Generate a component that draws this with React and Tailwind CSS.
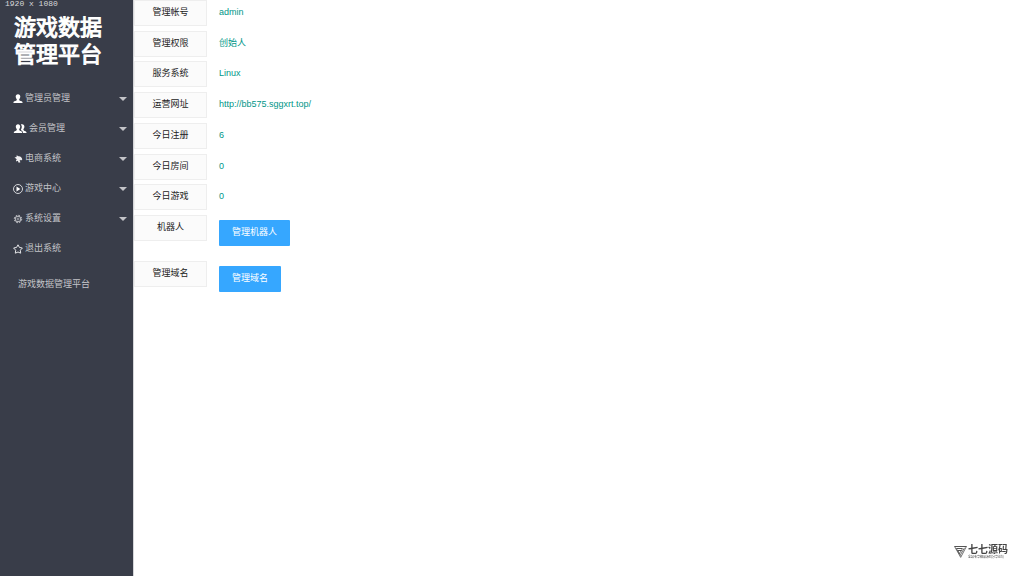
import { useState } from "react";

const menu = [
  { id: "admin", label: "管理员管理", icon: UserIcon, sub: true },
  { id: "member", label: "会员管理", icon: GroupIcon, sub: true },
  { id: "shop", label: "电商系统", icon: PlaneIcon, sub: true },
  { id: "game", label: "游戏中心", icon: PlayIcon, sub: true },
  { id: "setting", label: "系统设置", icon: GearIcon, sub: true },
  { id: "logout", label: "退出系统", icon: StarIcon, sub: false },
];

const info = [
  { label: "管理帐号", value: "admin" },
  { label: "管理权限", value: "创始人" },
  { label: "服务系统", value: "Linux" },
  { label: "运营网址", value: "http://bb575.sggxrt.top/" },
  { label: "今日注册", value: "6" },
  { label: "今日房间", value: "0" },
  { label: "今日游戏", value: "0" },
];

const actions = [
  { label: "机器人", button: "管理机器人" },
  { label: "管理域名", button: "管理域名" },
];

function UserIcon() {
  return (
    <svg viewBox="0 0 10 10" className="w-[10px] h-[10px]" fill="#fff">
      <path d="M5 .2c1.500 0 2.300 1 2.300 2.400 0 1.300-.5 2-1.100 2.700 0 1 .4 1.500 1.500 1.800 1.300.3 1.900.7 1.900 1.900H.4c0-1.200.6-1.600 1.900-1.900 1.100-.3 1.500-.8 1.500-1.800-.6-.7-1.100-1.400-1.100-2.700C2.700 1.200 3.500.2 5 .2z" />
    </svg>
  );
}

function GroupIcon() {
  return (
    <svg viewBox="0 0 14 10" className="w-[14px] h-[10px]" fill="#fff">
      <path d="M5 .2c1.400 0 2.200 1 2.200 2.400 0 1.200-.4 2-1 2.600 0 1 .4 1.400 1.400 1.700 1 .3 1.700.9 1.700 2.100H.8c0-1.200.6-1.800 1.600-2.100s1.400-.7 1.400-1.700c-.6-.6-1-1.400-1-2.600C2.800 1.200 3.600.2 5 .2z" />
      <path d="M9.200.2c1.400 0 2.200 1 2.200 2.400 0 1.200-.4 2-1 2.600 0 1 .4 1.400 1.400 1.700 1 .3 1.800.9 1.800 2.100h-3.500c0-1.300-.6-2.200-2-2.800-.2-.3-.2-.5-.1-.8.600-.8.9-1.700.8-2.800C8.700 1.700 8.400 1 7.800.5 8.200.3 8.700.2 9.200.2z" />
    </svg>
  );
}

function PlaneIcon() {
  return (
    <svg viewBox="0 0 10 10" className="w-[10px] h-[10px]" fill="#f0f0f2">
      <path d="M1.500 3.500 3.500 3 3.700 1.300l1.700 1C7.400 2 9 3.400 9.300 5.600L8 6.500 7 5.700l-.3 1 .7 1.500-1.700.6-.9-2.100-1.500.9L3 6.200l.8-1z" />
    </svg>
  );
}

function PlayIcon() {
  return (
    <svg viewBox="0 0 10 10" className="w-[10px] h-[10px]">
      <circle cx="5" cy="5" r="4.500" fill="none" stroke="#e4e5e8" strokeWidth=".9" />
      <path d="M3.500 2.600 7.400 5 3.500 7.400z" fill="#fff" />
    </svg>
  );
}

function GearIcon() {
  return (
    <svg viewBox="0 0 10 10" className="w-[10px] h-[10px]" fill="none" stroke="#d0d1d6">
      <circle cx="5" cy="5" r="3.700" strokeWidth="1" strokeDasharray="1.600 1.306" />
      <circle cx="5" cy="5" r="2.800" strokeWidth=".9" />
      <circle cx="5" cy="5" r="1" strokeWidth=".6" />
    </svg>
  );
}

function StarIcon() {
  return (
    <svg viewBox="0 0 10 10" className="w-[10px] h-[10px]" fill="none" stroke="#e4e5e8" strokeLinejoin="round">
      <path d="M5 .8 6.400 3.400l3 .6-2.100 2.200.4 3L5 8 2.300 9.200l.4-3L.6 4l3-.6z" />
    </svg>
  );
}

function Sidebar() {
  const [active, setActive] = useState(null);

  return (
    <aside className="w-[133px] shrink-0 bg-[#393d49] text-[#c3c4c8]">
      <div className="pl-[5px] h-2 font-['Liberation_Mono',monospace] text-[8px] leading-2 text-[#d8d8da]">1920 x 1080</div>
      <h1 className="mt-[6px] pl-[14px] text-[22px] leading-[27px] font-normal text-white [-webkit-text-stroke:1px_#fff] [paint-order:stroke] [stroke-linejoin:round]">
        游戏数据
        <br />
        管理平台
      </h1>
      <nav className="mt-4">
        {menu.map((item) => (
          <button
            key={item.id}
            onClick={() => setActive(item.id)}
            aria-current={active === item.id}
            className="flex items-center w-full h-[30px] pl-[13px] pr-[6px] gap-[2px] text-left hover:text-white"
          >
            <item.icon />
            <span className="flex-1">{item.label}</span>
            {item.sub && (
              <svg viewBox="0 0 8 4" className="w-2 h-1" fill="#c3c4c8">
                <path d="M0 0h8L4 4z" />
              </svg>
            )}
          </button>
        ))}
      </nav>
      <a href="#" className="block mt-[5px] pl-[18px] leading-[30px]">游戏数据管理平台</a>
    </aside>
  );
}

function Label({ children }) {
  return (
    <dt className="w-[73px] h-[26px] shrink-0 border border-[#eeeeee] bg-[#fbfbfb] text-center leading-[22px] text-[#222]">
      {children}
    </dt>
  );
}

function Watermark() {
  return (
    <div className="fixed right-4 bottom-[17px] flex items-center gap-px text-[#444]">
      <svg viewBox="0 0 14 14" className="w-[13px] h-[14px]" fill="none" stroke="#555">
        <path d="M.5 1h13M2.500 3.300h6.500M4 5.500h4" strokeWidth="1.100" />
        <path d="M.6 1 7.200 12.800 13.400 1M2.500 3.300 7.200 11M11.300 2.500 7 9.800M4 5.500 6.500 9.500M9.200 3.300 6.500 7.800" strokeWidth=".9" />
      </svg>
      <div className="font-['Liberation_Serif','Noto_Sans_CJK_SC',serif]">
        <div className="text-[10px] leading-[10px] font-bold">七七源码</div>
        <div className="text-[3px] leading-1">全站专享精品源码分享论坛</div>
      </div>
    </div>
  );
}

export default function App() {
  return (
    <div className="flex min-h-screen bg-white font-['Liberation_Sans','Noto_Sans_CJK_SC',sans-serif] text-[9px]">
      <Sidebar />
      <main className="flex-1 border-l border-[#d5d6d9]">
        <dl className="grid auto-rows-fr h-[215px]">
          {info.map((row) => (
            <div key={row.label} className="flex gap-3">
              <Label>{row.label}</Label>
              <dd className="leading-6 text-[#009688]">{row.value}</dd>
            </div>
          ))}
        </dl>
        <dl>
          {actions.map((row) => (
            <div key={row.label} className="flex gap-3 h-[46px]">
              <Label>{row.label}</Label>
              <dd className="pt-[5px]">
                <button className="h-[26px] px-[13px] rounded-[1px] bg-[#36a7ff] text-white hover:opacity-80">{row.button}</button>
              </dd>
            </div>
          ))}
        </dl>
      </main>
      <Watermark />
    </div>
  );
}
